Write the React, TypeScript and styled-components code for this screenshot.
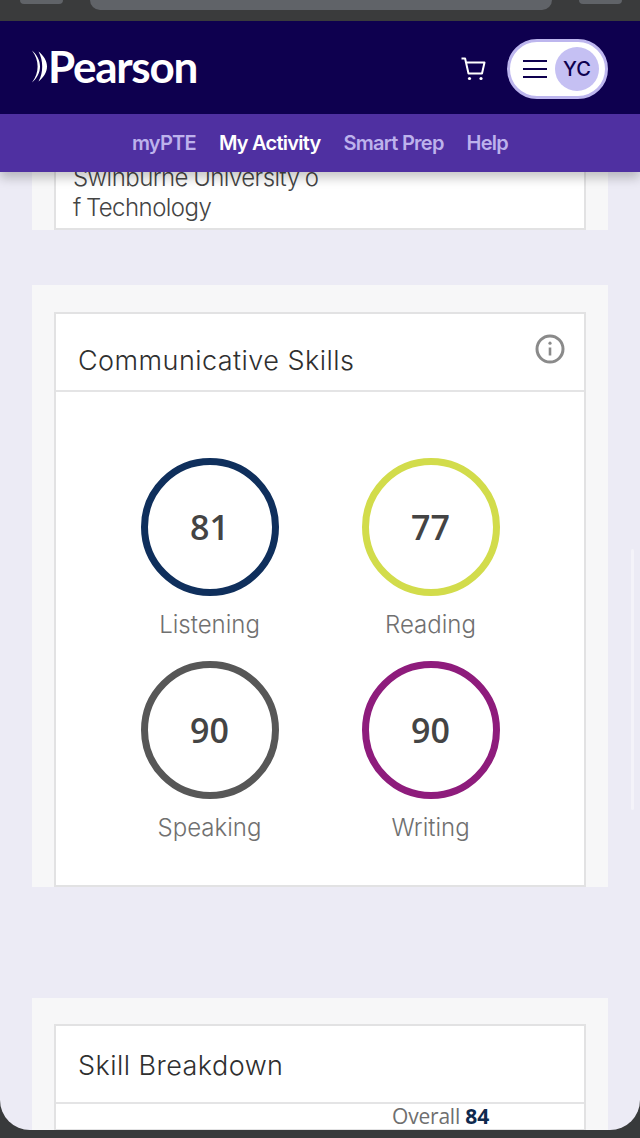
import React from "react";
import styled, { createGlobalStyle } from "styled-components";

const Global = createGlobalStyle`
  html, body { margin: 0; padding: 0; background: #383a3b; }
  #root { width: 640px; height: 1138px; overflow: hidden; }
`;

const Device = styled.div`
  width: 640px;
  height: 1138px;
  background: #383a3b;
  position: relative;
  overflow: hidden;
`;

const BrowserBar = styled.div`
  height: 21px;
  display: flex;
  align-items: flex-start;
  padding-left: 20px;
  gap: 27px;
  background: #3a3b3c;
  box-sizing: border-box;
`;

const BrowserKey = styled.div`
  width: 43px;
  height: 4px;
  background: #606368;
  border-radius: 0 0 12px 12px;
`;

const BrowserField = styled.div`
  width: 462px;
  height: 10px;
  background: #606368;
  border-radius: 0 0 16px 16px;
`;

const Screen = styled.div`
  height: 1109px;
  display: flex;
  flex-direction: column;
  background: #ecebf5;
  border-radius: 0 0 30px 30px;
  overflow: hidden;
`;

const Masthead = styled.header`
  height: 93px;
  flex: none;
  display: flex;
  align-items: center;
  background: #0e004f;
  padding: 0 32px;
  position: relative;
  z-index: 3;
`;

const Brand = styled.div`
  display: flex;
  align-items: center;
  gap: 1px;
  color: #fff;
  margin-bottom: 3px;
`;

const BrandName = styled.span`
  font-family: "Lato", sans-serif;
  font-weight: 700;
  font-size: 44px;
  line-height: 44px;
  letter-spacing: -1.25px;
`;

const Actions = styled.div`
  margin-left: auto;
  padding-top: 3px;
  display: flex;
  align-items: center;
  gap: 20px;
`;

const Pill = styled.div`
  width: 101px;
  height: 60px;
  box-sizing: border-box;
  background: #fff;
  border: 3px solid #bdb6ee;
  border-radius: 30px;
  display: flex;
  align-items: center;
  justify-content: space-between;
  padding: 0 6px 0 13px;
`;

const Avatar = styled.div`
  width: 44px;
  height: 44px;
  border-radius: 50%;
  background: #c5c0f3;
  color: #0e004f;
  display: flex;
  align-items: center;
  justify-content: center;
  font-family: "Inter", sans-serif;
  font-weight: 500;
  font-size: 20px;
`;

const SubNav = styled.nav`
  height: 58px;
  flex: none;
  display: flex;
  align-items: center;
  justify-content: center;
  gap: 23px;
  background: #4f30a1;
  box-shadow: 0 6px 10px rgba(0, 0, 0, 0.22);
  position: relative;
  z-index: 2;
`;

const NavLink = styled.a<{ $active?: boolean }>`
  font-family: "Inter", sans-serif;
  font-size: 20px;
  font-weight: 600;
  letter-spacing: -0.75px;
  color: ${(p) => (p.$active ? "#ffffff" : "#bdb2ec")};
`;

const Content = styled.main`
  flex: 1;
  min-height: 0;
  display: flex;
  flex-direction: column;
`;

const Panel = styled.section<{ $gap?: number; $pad?: number }>`
  margin: ${(p) => p.$gap ?? 0}px 32px 0;
  padding: ${(p) => p.$pad ?? 26}px 22px 0;
  background: #f7f7f8;
  flex: none;
`;

const Card = styled.div<{ $open?: boolean }>`
  background: #fff;
  border: 2px solid #e2e2e3;
  border-top-width: ${(p) => (p.$open ? 0 : 2)}px;
  border-bottom-width: 2px;
`;

const LeadPanel = styled(Panel)`
  margin-top: -14px;
  padding-top: 0;
  padding-bottom: 0;
`;

const University = styled.div`
  width: 250px;
  padding: 5px 0 5px 17px;
  font-family: "Inter", sans-serif;
  font-weight: 300;
  font-size: 24px;
  line-height: 30px;
  letter-spacing: -0.55px;
  word-spacing: -1px;
  color: #444;
  word-break: break-all;
`;

const CardHead = styled.div`
  height: 78px;
  box-sizing: border-box;
  border-bottom: 2px solid #e4e4e5;
  padding: 0 19px 0 22px;
  display: flex;
  justify-content: space-between;
`;

const CardTitle = styled.h2<{ $top: number }>`
  margin: ${(p) => p.$top}px 0 0;
  font-family: "Inter", sans-serif;
  font-weight: 300;
  font-size: 27px;
  line-height: 32px;
  letter-spacing: 0.45px;
  color: #2f2f2f;
`;

const InfoSlot = styled.div`
  margin-top: 20px;
  color: #8a8a8a;
  display: flex;
`;

const SkillGrid = styled.div`
  display: grid;
  grid-template-columns: 221px 221px;
  justify-content: center;
  row-gap: 21px;
  padding: 66px 0 0;
  height: 493px;
  box-sizing: border-box;
  align-content: start;
`;

const Skill = styled.div`
  display: flex;
  flex-direction: column;
  align-items: center;
`;

const Ring = styled.div<{ $color: string }>`
  width: 138px;
  height: 138px;
  box-sizing: border-box;
  border: 7px solid ${(p) => p.$color};
  border-radius: 50%;
  display: flex;
  align-items: center;
  justify-content: center;
  font-family: "Open Sans", sans-serif;
  font-weight: 600;
  font-size: 34px;
  color: #444;
`;

const SkillName = styled.div`
  margin-top: 14px;
  font-family: "Inter", sans-serif;
  font-weight: 300;
  font-size: 24px;
  line-height: 30px;
  color: #707070;
`;

const OverallRow = styled.div`
  height: 24px;
  padding: 1px 0 0 336px;
  font-family: "Open Sans", sans-serif;
  font-size: 21px;
  line-height: 23px;
  color: #6f6f6f;
  letter-spacing: -0.2px;
`;

const OverallValue = styled.b`
  color: #0f2a4e;
  font-weight: 700;
`;

const ScrollThumb = styled.div`
  position: absolute;
  right: 6px;
  top: 549px;
  width: 3px;
  height: 261px;
  border-radius: 2px;
  background: #f4f3f9;
`;

const skills = [
  { name: "Listening", score: 81, color: "#0f2f5c" },
  { name: "Reading", score: 77, color: "#d2dc4b" },
  { name: "Speaking", score: 90, color: "#575757" },
  { name: "Writing", score: 90, color: "#8e1c7c" },
];

const Swoosh = () => (
  <svg width="15" height="33" viewBox="0 0 15 33" fill="#fff" aria-hidden="true">
    <path d="M0 0.5C4 6 5.6 11 5.6 16.5S4 27 0 32.5C5.2 28 8 22.5 8 16.5S5.2 5 0 0.5Z" />
    <path d="M6.5 1.5C11.5 5.5 15 10.5 15 16.5S11.5 27.5 6.5 31.5C9.2 26.5 10.2 21.5 10.2 16.5S9.2 6.5 6.5 1.5Z" />
  </svg>
);

const Cart = () => (
  <svg width="27" height="24" viewBox="0 0 26 24" fill="none" stroke="#fff" strokeWidth="2" aria-hidden="true">
    <path d="M1 1.5h3.6L8 16.5h13.5L24 5.5H5.4" strokeLinejoin="round" />
    <circle cx="9" cy="21.5" r="1.6" fill="#fff" stroke="none" />
    <circle cx="20.5" cy="21.5" r="1.6" fill="#fff" stroke="none" />
  </svg>
);

const Burger = () => (
  <svg width="24" height="18" viewBox="0 0 24 18" stroke="#0e004f" strokeWidth="2" aria-hidden="true">
    <path d="M0 1h24M0 9h24M0 17h24" />
  </svg>
);

const Info = () => (
  <svg width="30" height="30" viewBox="0 0 30 30" fill="none" stroke="currentColor" aria-hidden="true">
    <circle cx="15" cy="15" r="13" strokeWidth="3" />
    <path d="M15 13.5v8" strokeWidth="2.6" />
    <circle cx="15" cy="9.2" r="1.6" fill="currentColor" stroke="none" />
  </svg>
);

export default function App() {
  return (
    <Device>
      <Global />
      <BrowserBar>
        <BrowserKey />
        <BrowserField />
        <BrowserKey />
      </BrowserBar>
      <Screen>
        <Masthead>
          <Brand>
            <Swoosh />
            <BrandName>Pearson</BrandName>
          </Brand>
          <Actions>
            <Cart />
            <Pill>
              <Burger />
              <Avatar>YC</Avatar>
            </Pill>
          </Actions>
        </Masthead>
        <SubNav>
          <NavLink>myPTE</NavLink>
          <NavLink $active>My Activity</NavLink>
          <NavLink>Smart Prep</NavLink>
          <NavLink>Help</NavLink>
        </SubNav>
        <Content>
          <LeadPanel>
            <Card $open>
              <University>Swinburne University of Technology</University>
            </Card>
          </LeadPanel>
          <Panel $gap={55} $pad={27}>
            <Card>
              <CardHead>
                <CardTitle $top={31}>Communicative Skills</CardTitle>
                <InfoSlot>
                  <Info />
                </InfoSlot>
              </CardHead>
              <SkillGrid>
                {skills.map((s) => (
                  <Skill key={s.name}>
                    <Ring $color={s.color}>{s.score}</Ring>
                    <SkillName>{s.name}</SkillName>
                  </Skill>
                ))}
              </SkillGrid>
            </Card>
          </Panel>
          <Panel $gap={111}>
            <Card>
              <CardHead>
                <CardTitle $top={24}>Skill Breakdown</CardTitle>
              </CardHead>
              <OverallRow>
                Overall <OverallValue>84</OverallValue>
              </OverallRow>
            </Card>
          </Panel>
        </Content>
      </Screen>
      <ScrollThumb />
    </Device>
  );
}
